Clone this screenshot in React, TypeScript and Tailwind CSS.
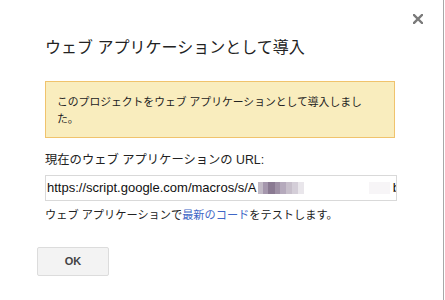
import React from "react";

export default function App() {
  const blocks = [
    { w: 5, c: "#c2bac6" },
    { w: 5, c: "#a597ad" },
    { w: 7, c: "#8a7a92" },
    { w: 5, c: "#9f91a6" },
    { w: 6, c: "#b5aabc" },
    { w: 6, c: "#c7bfcb" },
    { w: 6, c: "#d4ced8" },
    { w: 6, c: "#e9e6eb" },
  ];
  return (
    <div
      className="relative w-[444px] h-[300px] bg-white border-r border-[#a8a8a8] text-[#222]"
      style={{ fontFamily: '"Liberation Sans", "Noto Sans CJK JP", sans-serif' }}
    >
      <button className="absolute left-[413px] top-[14px] w-[10px] h-[10px] p-0">
        <svg width="10" height="10" viewBox="0 0 10 10">
          <path d="M1 1 L9 9 M9 1 L1 9" stroke="#7a7a7a" strokeWidth="2.4" strokeLinecap="square" />
        </svg>
      </button>

      <div className="flex flex-col pt-[38px] pl-[45px]">
        <div className="text-[16px] leading-[20px]">ウェブ アプリケーションとして導入</div>

        <div className="mt-[23px] w-[350px] bg-[#f9edbe] border border-[#f0c36d] pl-[11px] pr-[14px] pt-[12px] pb-[9px] text-[10.8px] leading-[17px]">
          このプロジェクトをウェブ アプリケーションとして導入しました。
        </div>

        <div className="mt-[14px] text-[12.3px] leading-[16px]">現在のウェブ アプリケーションの URL:</div>

        <div className="mt-[7px] w-[352px] h-[26px] border border-[#d9d9d9] flex items-center pl-[1px] pr-0 overflow-hidden whitespace-nowrap">
          <span className="text-[13px] leading-[16px] text-[#111]">https://script.google.com/macros/s/A</span>
          <div className="flex h-[12px] ml-[1px]">
            {blocks.map((b, i) => (
              <div key={i} className="h-full" style={{ width: b.w, backgroundColor: b.c }} />
            ))}
          </div>
          <div className="flex-1" />
          <div className="w-[21px] h-[12px] bg-[#f7f5f7]" />
          <span className="text-[13px] leading-[16px] ml-[3px] mr-[-4px] text-[#111]">b</span>
        </div>

        <div className="mt-[6px] text-[11.2px] leading-[16px]">
          ウェブ アプリケーションで<span className="text-[#3f67c6]">最新のコード</span>をテストします。
        </div>
      </div>

      <div className="pl-[37px] mt-[24px]">
        <button className="w-[72px] h-[29px] bg-[#f3f3f3] border border-[#dcdcdc] rounded-[2px] text-[11px] font-bold text-[#444] flex items-center justify-center">
          OK
        </button>
      </div>
    </div>
  );
}
